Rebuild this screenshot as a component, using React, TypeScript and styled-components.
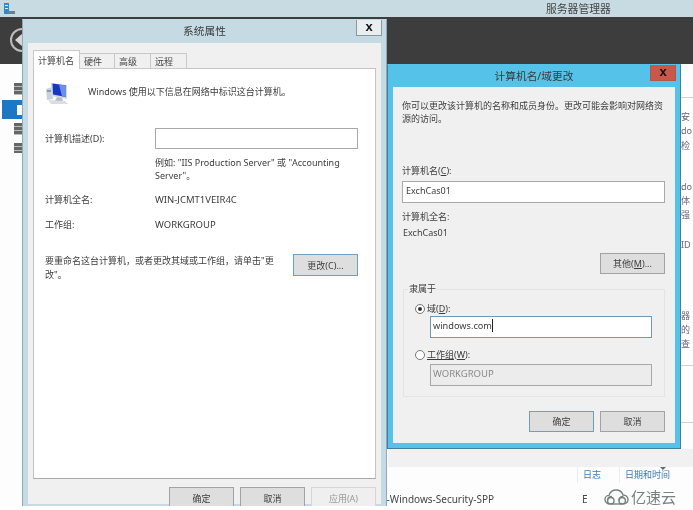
import React from "react";
import styled, { createGlobalStyle } from "styled-components";

const Global = createGlobalStyle`
  html, body {
    margin: 0;
    padding: 0;
    background: #fff;
  }
  * { box-sizing: border-box; }
`;

const Desktop = styled.div`
  position: relative;
  width: 693px;
  height: 510px;
  overflow: hidden;
  display: flex;
  flex-direction: column;
  background: #fdfdfd;
  font-family: "Noto Sans", "Noto Sans CJK SC", sans-serif;
  font-size: 9px;
  line-height: 13px;
  color: #3c3c3c;
  filter: blur(0.35px);
`;

const TitleBar = styled.div`
  height: 17px;
  background: #c8dbe2;
  display: flex;
  align-items: center;
  padding-left: 4px;
  position: relative;
`;

const AppTitle = styled.span`
  margin-left: 531px;
  font-size: 10.8px;
  color: #444;
`;

const DarkBand = styled.div`
  height: 47px;
  background: #3d3d3d;
  padding: 11px 0 0 10px;
`;

const BackButton = styled.div`
  width: 24px;
  height: 24px;
  border: 2px solid #bdbdbd;
  border-radius: 50%;
  display: flex;
  align-items: center;
  padding-left: 3px;
  &::before {
    content: "";
    border-top: 7px solid transparent;
    border-bottom: 7px solid transparent;
    border-right: 8px solid #d6d6d6;
  }
`;

const Workspace = styled.div`
  flex: 1;
  display: flex;
  min-height: 0;
`;

const Sidebar = styled.div`
  width: 22px;
  padding-top: 19px;
  display: flex;
  flex-direction: column;
  align-items: flex-end;
`;

const NavItem = styled.div<{ $h: number; $gap: number }>`
  width: 8px;
  height: ${(p) => p.$h}px;
  margin-bottom: ${(p) => p.$gap}px;
  background: repeating-linear-gradient(#666 0 3px, #bbb 3px 4px);
`;

const ActiveNavItem = styled.div`
  width: 20px;
  height: 19px;
  margin-bottom: 4px;
  background: #1a78c6;
  padding: 5px 0 4px 15px;
`;

const NavGlyph = styled.div`
  height: 100%;
  background: #fff;
`;

const MainColumn = styled.div`
  flex: 1;
  display: flex;
  flex-direction: column;
  padding-left: 366px;
`;

const ListArea = styled.div`
  height: 385px;
  display: flex;
  flex-direction: column;
  align-items: flex-end;
`;

const RightStrip = styled.div`
  width: 12px;
  height: 100%;
  padding-top: 33px;
  display: flex;
  flex-direction: column;
  overflow: hidden;
  font-size: 9px;
  color: #667;
  white-space: nowrap;
`;

const StripRule = styled.div<{ $top: number }>`
  height: 1px;
  background: #cfcfcf;
  margin-top: ${(p) => p.$top}px;
  flex: none;
`;

const StripText = styled.div<{ $top: number }>`
  height: 14px;
  line-height: 14px;
  margin-top: ${(p) => p.$top}px;
  flex: none;
`;

const StatusBand = styled.div`
  height: 18px;
  background: #f1f1f1;
`;

const LogHeader = styled.div`
  display: flex;
  height: 16px;
  padding-left: 189px;
  color: #3a7ab8;
  font-size: 9px;
  position: relative;
`;

const LogHeaderCell = styled.div<{ $width: number }>`
  width: ${(p) => p.$width}px;
  padding-left: 5px;
  border-left: 1px solid #e6eef4;
  line-height: 16px;
`;

const SortMark = styled.div`
  position: absolute;
  left: 272px;
  top: 0;
  border-left: 3px solid transparent;
  border-right: 3px solid transparent;
  border-top: 3px solid #667;
`;

const LogRow = styled.div`
  display: flex;
  margin-top: 9px;
  font-size: 10px;
  color: #444;
  line-height: 14px;
`;

const LogSource = styled.div`
  width: 199px;
  margin-left: -5px;
`;

const Watermark = styled.div`
  position: absolute;
  right: 17px;
  top: 489px;
  height: 15px;
  display: flex;
  align-items: center;
  gap: 2px;
  font-family: "Noto Sans CJK SC", sans-serif;
  font-size: 15px;
  line-height: 15px;
  color: #75827f;
`;

const BottomEdge = styled.div`
  position: absolute;
  left: 0;
  top: 506px;
  width: 388px;
  height: 4px;
  background: #fff;
`;

const Window = styled.div<{ $x: number; $y: number; $w: number; $h: number; $frame: string; $edge: string }>`
  position: absolute;
  left: ${(p) => p.$x}px;
  top: ${(p) => p.$y}px;
  width: ${(p) => p.$w}px;
  height: ${(p) => p.$h}px;
  background: ${(p) => p.$frame};
  border: 1px solid ${(p) => p.$edge};
  border-top-color: ${(p) => p.$frame};
  padding: 0 5px 5px;
  display: flex;
  flex-direction: column;
`;

const WindowHead = styled.div<{ $h: number }>`
  height: ${(p) => p.$h}px;
  flex: none;
  display: flex;
  align-items: center;
  justify-content: center;
  font-size: 10.7px;
  color: #3a3a3a;
`;

const CloseButton = styled.div<{ $danger?: boolean }>`
  position: absolute;
  top: 0;
  right: 4px;
  width: 26px;
  height: 16px;
  display: flex;
  align-items: center;
  justify-content: center;
  font-family: "Liberation Sans", sans-serif;
  font-weight: 700;
  font-size: 13px;
  padding-bottom: 2px;
  color: #111;
  background: ${(p) => (p.$danger ? "#c9574a" : "#e9eef0")};
  border: 1px solid ${(p) => (p.$danger ? "#b5544a" : "#8c979c")};
  border-top: none;
`;

const WindowBody = styled.div`
  flex: 1;
  background: #f0f0f0;
  min-height: 0;
  display: flex;
  flex-direction: column;
`;

const SystemBody = styled(WindowBody)`
  padding: 7px 5px 0;
`;

const TabRow = styled.div`
  display: flex;
  align-items: flex-end;
  height: 19px;
  flex: none;
  position: relative;
  z-index: 1;
  margin-bottom: -1px;
`;

const Tab = styled.div<{ $active?: boolean; $w: number }>`
  width: ${(p) => p.$w}px;
  height: ${(p) => (p.$active ? "19px" : "16px")};
  border: 1px solid #c9c9c9;
  border-left-width: ${(p) => (p.$active ? "1px" : "0")};
  border-bottom: ${(p) => (p.$active ? "none" : "1px solid #c9c9c9")};
  background: ${(p) => (p.$active ? "#fff" : "#f0f0f0")};
  display: flex;
  align-items: center;
  padding-left: 4px;
  color: #444;
`;

const TabPanel = styled.div`
  height: 411px;
  flex: none;
  background: #fff;
  border: 1px solid #c4c4c4;
  border-bottom: 1px solid #a9a9a9;
  padding: 13px 17px 0 11px;
  display: flex;
  flex-direction: column;
`;

const IntroRow = styled.div`
  display: flex;
  align-items: flex-start;
  gap: 19px;
  height: 24px;
`;

const IntroText = styled.span`
  margin-top: 3px;
`;

const FormRow = styled.div<{ $top: number; $h?: number }>`
  display: grid;
  grid-template-columns: 110px 1fr;
  align-items: center;
  margin-top: ${(p) => p.$top}px;
  height: ${(p) => (p.$h ? `${p.$h}px` : "auto")};
`;

const WideValue = styled.span`
  font-size: 9.5px;
`;

const TextBox = styled.div<{ $tone?: "plain" | "focus" | "off" }>`
  height: ${(p) => (p.$tone === "plain" ? "21px" : "22px")};
  background: ${(p) => (p.$tone === "off" ? "#ececec" : "#fff")};
  border: 1px solid ${(p) => (p.$tone === "focus" ? "#6f99b5" : "#a8a8a8")};
  color: ${(p) => (p.$tone === "off" ? "#8a8a8a" : "#3c3c3c")};
  display: flex;
  align-items: center;
  padding: 0 0 3px 2px;
  font-size: ${(p) => (p.$tone === "focus" ? "9.2px" : "9.5px")};
`;

const Caret = styled.span`
  width: 1px;
  height: 13px;
  background: #222;
`;

const Hint = styled.div`
  margin: 7px 0 0 110px;
  width: 200px;
`;

const RenameRow = styled.div`
  display: flex;
  justify-content: space-between;
  align-items: flex-start;
  margin-top: 23px;
`;

const RenameText = styled.div`
  width: 232px;
  line-height: 14px;
`;

const Btn = styled.div<{ $blue?: boolean; $off?: boolean }>`
  width: 65px;
  height: 21px;
  flex: none;
  display: flex;
  align-items: center;
  justify-content: center;
  color: ${(p) => (p.$off ? "#9a9a9a" : "#3c3c3c")};
  background: ${(p) => (p.$off ? "#efefef" : "#dedede")};
  border: 1px solid ${(p) => (p.$blue ? "#6f9fbd" : p.$off ? "#d6d6d6" : "#a2a2a2")};
`;

const ChangeBtn = styled(Btn)`
  height: 22px;
`;

const FooterBtn = styled(Btn)`
  height: 22px;
`;

const Footer = styled.div<{ $top: number }>`
  display: flex;
  justify-content: flex-end;
  gap: 6px;
  margin-top: ${(p) => p.$top}px;
  flex: none;
`;

const DomainBody = styled(WindowBody)`
  padding: 12px 10px 0 9px;
`;

const Note = styled.div`
  width: 265px;
`;

const Label = styled.div<{ $top: number }>`
  margin-top: ${(p) => p.$top}px;
`;

const NameBox = styled(TextBox)`
  margin-top: 4px;
  padding-left: 3px;
  font-size: 9px;
`;

const PlainValue = styled.div`
  margin-top: 3px;
  padding-left: 1px;
`;

const OtherRow = styled.div`
  display: flex;
  justify-content: flex-end;
  margin-top: 14px;
`;

const GroupBox = styled.fieldset`
  margin: 9px 0 0 1px;
  padding: 7px 12px 0 11px;
  height: 114px;
  border: 1px solid #e4e4e4;
  min-width: 0;
`;

const GroupLegend = styled.legend`
  padding: 0 1px;
  margin-left: -7px;
  line-height: 12px;
`;

const RadioRow = styled.div<{ $top: number }>`
  display: flex;
  align-items: center;
  gap: 2px;
  margin-top: ${(p) => p.$top}px;
  height: 13px;
`;

const Radio = styled.div<{ $on?: boolean }>`
  width: 10px;
  height: 10px;
  border-radius: 50%;
  border: 1px solid #777;
  background: #fff;
  display: flex;
  align-items: center;
  justify-content: center;
  &::after {
    content: "";
    width: 4px;
    height: 4px;
    border-radius: 50%;
    background: ${(p) => (p.$on ? "#333" : "transparent")};
  }
`;

const IndentBox = styled(TextBox)<{ $top: number }>`
  margin: ${(p) => p.$top}px 0 0 15px;
`;

function ComputerIcon() {
  return (
    <svg width="24" height="23" viewBox="0 0 24 23">
      <path d="M1 7 L7 5 L8 17 L2 18 Z" fill="#c9d3da" />
      <rect x="2" y="8" width="4" height="2" fill="#7fa0bb" />
      <path d="M6 1 L22 3 L22 17 L6 14 Z" fill="#d2d8de" />
      <path d="M7.5 1.5 L21 3.5 L21 15 L8 12.5 Z" fill="#1636c8" />
      <path d="M14 2.5 L21 3.5 L21 15 L17 14.2 Z" fill="#6f8fe6" />
      <path d="M12 15 L17 16 L18 19 L10 19 Z" fill="#b4bcc4" />
      <path d="M3 18 L20 19 L23 22 L6 22 Z" fill="#dadee2" />
    </svg>
  );
}

function ManagerIcon() {
  return (
    <svg width="11" height="12" viewBox="0 0 11 12">
      <rect x="0" y="0" width="5" height="11" fill="#2d8ad0" />
      <rect x="1" y="2" width="3" height="1" fill="#e6f2fb" />
      <rect x="1" y="5" width="3" height="1" fill="#e6f2fb" />
      <rect x="4" y="8" width="7" height="3" fill="#6d7f8c" />
    </svg>
  );
}

function CloudLogo() {
  return (
    <svg width="25" height="16" viewBox="0 0 25 16" fill="none" stroke="#75827f" strokeWidth="1.4">
      <path d="M6.5 15 C3 15 1 12.8 1 10.5 C1 8 3 6.4 5 6.4 C6 3 9 1 12.2 1 C15.5 1 18 3 19 6 C22 6 24 8 24 10.5 C24 13 22 15 18.5 15" />
      <path d="M10 11.7 a3.2 3.2 0 1 1 -6.4 0 a3.2 3.2 0 1 1 6.4 0" />
      <path d="M3.6 11.5 C3.6 9 5.5 7.4 8 7.4" />
      <path d="M21.4 11.7 a3.2 3.2 0 1 1 -6.4 0 a3.2 3.2 0 1 1 6.4 0" />
      <path d="M15 11.5 C15 9 16.9 7.4 19.4 7.4" />
      <path d="M6.8 15 L18.2 15" />
    </svg>
  );
}

const stripItems: [number, string][] = [
  [12, "安"],
  [0, "do"],
  [1, "检"],
  [27, "do"],
  [0, "体"],
  [0, "强"],
  [16, "ID"],
  [57, "器"],
  [0, "的"],
  [0, "查"],
];

export default function App() {
  return (
    <>
      <Global />
      <Desktop>
        <TitleBar>
          <ManagerIcon />
          <AppTitle>服务器管理器</AppTitle>
        </TitleBar>
        <DarkBand>
          <BackButton />
        </DarkBand>
        <Workspace>
          <Sidebar>
            <NavItem $h={12} $gap={5} />
            <ActiveNavItem>
              <NavGlyph />
            </ActiveNavItem>
            <NavItem $h={12} $gap={8} />
            <NavItem $h={10} $gap={0} />
          </Sidebar>
          <MainColumn>
            <ListArea>
              <RightStrip>
                <StripRule $top={0} />
                {stripItems.map(([top, text], i) => (
                  <StripText key={i} $top={top}>
                    {text}
                  </StripText>
                ))}
                <StripRule $top={14} />
                <StripRule $top={56} />
              </RightStrip>
            </ListArea>
            <StatusBand />
            <LogHeader>
              <LogHeaderCell $width={42}>日志</LogHeaderCell>
              <LogHeaderCell $width={60}>日期和时间</LogHeaderCell>
              <SortMark />
            </LogHeader>
            <LogRow>
              <LogSource>t-Windows-Security-SPP</LogSource>
              <span>E</span>
            </LogRow>
          </MainColumn>
        </Workspace>

        <Window $x={22} $y={19} $w={365} $h={491} $frame="#c6dae3" $edge="#8da9b8">
          <WindowHead $h={23}>系统属性</WindowHead>
          <CloseButton>x</CloseButton>
          <SystemBody>
            <TabRow>
              <Tab $active $w={47}>计算机名</Tab>
              <Tab $w={35}>硬件</Tab>
              <Tab $w={36}>高级</Tab>
              <Tab $w={36}>远程</Tab>
            </TabRow>
            <TabPanel>
              <IntroRow>
                <ComputerIcon />
                <IntroText>Windows 使用以下信息在网络中标识这台计算机。</IntroText>
              </IntroRow>
              <FormRow $top={22}>
                <span>计算机描述(D):</span>
                <TextBox $tone="plain" />
              </FormRow>
              <Hint>例如: "IIS Production Server" 或 "Accounting Server"。</Hint>
              <FormRow $top={10} $h={14}>
                <span>计算机全名:</span>
                <WideValue>WIN-JCMT1VEIR4C</WideValue>
              </FormRow>
              <FormRow $top={11} $h={14}>
                <span>工作组:</span>
                <WideValue>WORKGROUP</WideValue>
              </FormRow>
              <RenameRow>
                <RenameText>要重命名这台计算机，或者更改其域或工作组，请单击"更改"。</RenameText>
                <ChangeBtn $blue>更改(C)...</ChangeBtn>
              </RenameRow>
            </TabPanel>
            <Footer $top={8}>
              <FooterBtn>确定</FooterBtn>
              <FooterBtn>取消</FooterBtn>
              <FooterBtn $off>应用(A)</FooterBtn>
            </Footer>
          </SystemBody>
        </Window>
        <BottomEdge />

        <Window $x={387} $y={64} $w={294} $h={385} $frame="#55c3e9" $edge="#3f7f9c">
          <WindowHead $h={22}>计算机名/域更改</WindowHead>
          <CloseButton $danger>x</CloseButton>
          <DomainBody>
            <Note>你可以更改该计算机的名称和成员身份。更改可能会影响对网络资源的访问。</Note>
            <Label $top={39}>计算机名(<u>C</u>):</Label>
            <NameBox>ExchCas01</NameBox>
            <Label $top={7}>计算机全名:</Label>
            <PlainValue>ExchCas01</PlainValue>
            <OtherRow>
              <Btn>其他(<u>M</u>)...</Btn>
            </OtherRow>
            <GroupBox>
              <GroupLegend>隶属于</GroupLegend>
              <RadioRow $top={0}>
                <Radio $on />
                <span>域(<u>D</u>):</span>
              </RadioRow>
              <IndentBox $tone="focus" $top={1}>
                windows.com
                <Caret />
              </IndentBox>
              <RadioRow $top={10}>
                <Radio />
                <span><u>工作组</u>(<u>W</u>):</span>
              </RadioRow>
              <IndentBox $tone="off" $top={3}>WORKGROUP</IndentBox>
            </GroupBox>
            <Footer $top={14}>
              <Btn $blue>确定</Btn>
              <Btn>取消</Btn>
            </Footer>
          </DomainBody>
        </Window>

        <Watermark>
          <CloudLogo />
          亿速云
        </Watermark>
      </Desktop>
    </>
  );
}
